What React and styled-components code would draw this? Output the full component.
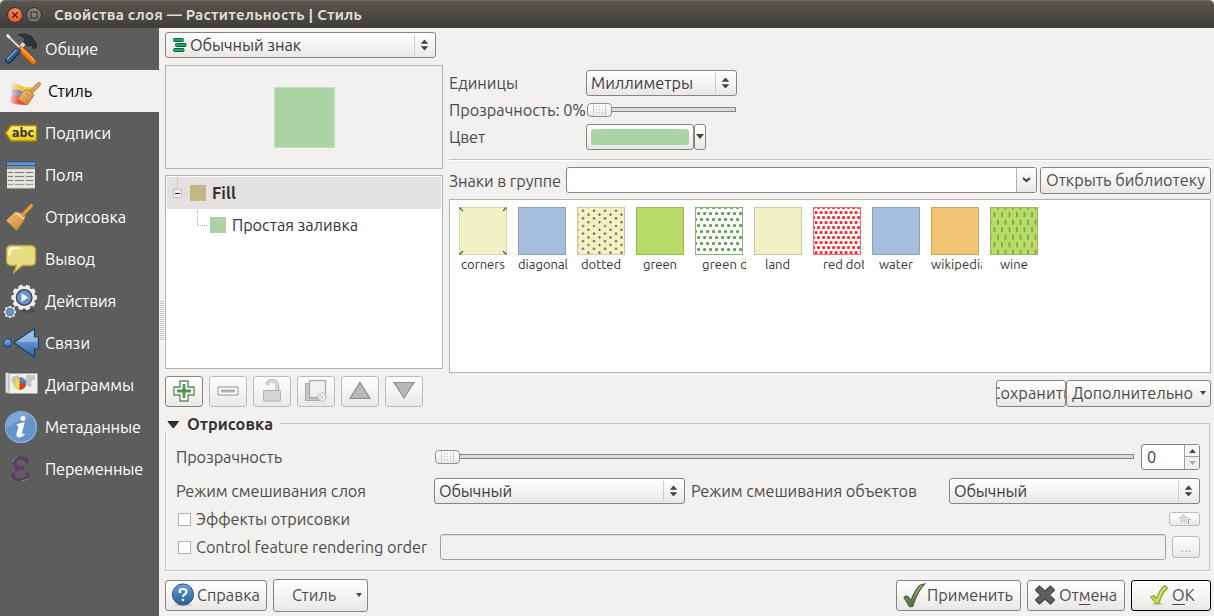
import React, { useLayoutEffect, useRef, useState } from 'react';
import styled, { createGlobalStyle, css } from 'styled-components';

const Global = createGlobalStyle`
  *, *::before, *::after { box-sizing: border-box; }
  html, body, #root { margin: 0; width: 1214px; height: 616px; overflow: hidden; }
  body {
    font-family: Ubuntu, "Noto Sans", "Open Sans", sans-serif;
    font-size: 16.3px; line-height: 20px; color: #4c4c4c; background: #f2f1f0;
  }
  svg { display: block; flex: none; }
`;

/* ---------- text ---------- */

const FitSpan = styled.span`
  display: inline-block;
  white-space: nowrap;
  flex: none;
  width: ${p => p.$w}px;
  font-size: ${p => p.$size || 16.3}px;
`;

function Label({ w, size, children, className }) {
  const ref = useRef(null);
  const [tracking, setTracking] = useState(0);
  useLayoutEffect(() => {
    const range = document.createRange();
    range.selectNodeContents(ref.current);
    const natural = range.getBoundingClientRect().width;
    const count = ref.current.textContent.length;
    setTracking((w - natural) / count);
  }, [w, size]);
  return (
    <FitSpan ref={ref} className={className} $w={w} $size={size} style={{ letterSpacing: tracking }}>
      {children}
    </FitSpan>
  );
}

/* ---------- window ---------- */

const Window = styled.div`
  width: 1214px; height: 616px; display: flex; flex-direction: column;
  background: #f2f1f0; overflow: hidden;
`;
const TitleBar = styled.header`
  height: 28px; flex: none; display: flex; align-items: center; padding: 1px 6px 0 7px;
  border-radius: 5px 5px 0 0;
  background: linear-gradient(#5b5952 0, #55534b 3px, #3f3e39 100%);
  border-top: 1px solid #6a685f;
  color: #dfdbd2; font-weight: 700;
`;
const WinButton = styled.span`
  width: 16px; height: 16px; border-radius: 50%; margin-right: ${p => p.$gap}px;
  display: grid; place-items: center; border: 1px solid #35332d;
  background: ${p => (p.$close ? 'radial-gradient(circle at 50% 25%, #f58a63, #e2521f)' : 'radial-gradient(circle at 50% 25%, #8d8a80, #67655c)')};
`;
const Body = styled.div`display: flex; flex: 1; min-height: 0;`;

const Sidebar = styled.nav`width: 159px; flex: none; background: #5d5d5d; color: #fff;`;
const NavItem = styled.div`
  height: 42px; display: flex; align-items: center;
  padding-left: ${p => (p.$active ? 3 : 0)}px;
  background: ${p => (p.$active ? '#f2f1f0' : 'transparent')};
  color: ${p => (p.$active ? '#000' : '#fff')};
  svg { width: 45px; height: 42px; }
`;
const Splitter = styled.div`
  width: 6px; flex: none; padding-top: 273px;
  &::before {
    content: ''; display: block; width: 4px; height: 40px; margin-left: 1px;
    background: repeating-linear-gradient(#c4c2bf 0 1px, #fbfbfa 1px 2px);
  }
`;
const Content = styled.main`width: 1046px; flex: none; padding-top: 4px; display: flex; flex-direction: column;`;

/* ---------- controls ---------- */

const raised = css`
  border: 1px solid ${p => (p.$off ? '#bdbbb8' : '#878583')};
  border-radius: 3px;
  background: linear-gradient(#fff, #f5f4f3 50%, #e9e8e6);
`;
const Button = styled.button`
  ${raised}
  width: ${p => p.$w}px; height: ${p => p.$h}px; flex: none; padding: 0 ${p => p.$pr || 0}px 1px ${p => p.$pl || 0}px;
  display: flex; align-items: center; justify-content: ${p => (p.$pl !== undefined ? 'flex-start' : 'center')};
  font: inherit; color: ${p => (p.$off ? '#a5a3a0' : '#4c4c4c')}; overflow: hidden; text-align: left;
  ${p => p.$default && 'border-color: #000;'}
  u { text-underline-offset: 3px; text-decoration-thickness: 1px; }
`;
const ComboBox = styled.div`
  ${raised}
  width: ${p => p.$w}px; height: 26px; flex: none; display: flex; align-items: center;
  padding-left: ${p => (p.$pl === undefined ? 4 : p.$pl)}px; color: #3c3c3c;
`;
const ComboArrows = styled.span`
  margin-left: auto; width: 21px; height: 20px; border-left: 1px solid #d0cecb; padding-left: 5px;
  display: flex; align-items: center;
`;
const Combo = ({ w, pl, children }) => (
  <ComboBox $w={w} $pl={pl}>
    {children}
    <ComboArrows>
      <svg width="9" height="12" viewBox="0 0 9 12"><path d="M4.5 0.6 8.3 4.8H.7zM4.5 11.4 8.3 7.2H.7z" fill="#444" /></svg>
    </ComboArrows>
  </ComboBox>
);

const SliderBox = styled.div`display: flex; align-items: center; width: ${p => p.$w}px; flex: none; padding-bottom: 1px;`;
const Knob = styled.span`
  ${raised}
  width: 25px; height: 14px; border-radius: 4px; flex: none; display: grid; place-items: center;
  border-color: #92908d;
`;
const Track = styled.span`
  flex: 1; height: 5px; border: 1px solid #868482; border-left: 0; background: #dddbd9;
`;
const Slider = ({ w }) => (
  <SliderBox $w={w}>
    <Knob>
      <svg width="13" height="12" viewBox="0 0 13 12">
        <path d="M.5 0v12M12.5 0v12" stroke="#d0ceca" />
        <path d="M3 2.5h8M3 5.5h8M3 8.5h8" stroke="#c0beba" strokeDasharray="1 2" />
      </svg>
    </Knob>
    <Track />
  </SliderBox>
);

const Check = styled.span`
  width: 13px; height: 13px; flex: none; background: #fff; border: 1px solid #b3b1ae; margin-right: 5px;
`;

/* ---------- upper part ---------- */

const Upper = styled.section`display: flex; gap: 6px; height: 375px;`;
const LeftColumn = styled.div`width: 278px; flex: none; display: flex; flex-direction: column;`;
const RightColumn = styled.div`width: 762px; flex: none; padding-top: 38px; display: flex; flex-direction: column;`;

const Preview = styled.div`
  height: 104px; margin-top: 7px; border: 1px solid #b3b1ae; display: grid; place-items: center;
`;
const PreviewSwatch = styled.div`width: 61px; height: 61px; background: #acd3a4; border: 1px solid #c4dfbe;`;
const Tree = styled.div`
  height: 194px; margin-top: 6px; border: 1px solid #b3b1ae; background: #fff; padding: 1px;
`;
const TreeRow = styled.div`
  height: 32px; display: flex; align-items: center; color: #333;
  background: ${p => (p.$selected ? '#e4e2e0' : 'transparent')};
  font-weight: ${p => (p.$selected ? 700 : 400)};
`;
const LayerSwatch = styled.span`width: 16px; height: 16px; flex: none; margin-right: 6px; background: ${p => p.$color};`;
const ToolRow = styled.div`display: flex; gap: 6px; margin-top: 7px;`;

const FormRow = styled.div`
  display: flex; align-items: center; height: ${p => p.$h}px; padding-left: ${p => p.$pl || 0}px;
  margin-bottom: ${p => p.$mb || 0}px; flex: none;
`;
const ColorFill = styled.span`width: 98px; height: 16px; border-radius: 3px; background: #acd3a4;`;
const Divider = styled.div`height: 2px; margin: 9px 0 6px; border-top: 1px solid #c6c4c1; border-bottom: 1px solid #fff;`;
const EditCombo = styled.div`
  width: 471px; height: 26px; margin: 0 3px 1px 0; flex: none; border: 1px solid #878583; border-radius: 3px; background: #fff;
  display: flex; justify-content: flex-end; overflow: hidden;
`;
const EditArrow = styled.span`
  width: 20px; border-left: 1px solid #b3b1ae; display: grid; place-items: center;
  background: linear-gradient(#fff, #e9e8e6);
`;
const SymbolList = styled.div`
  height: 174px; margin-top: 5px; border: 1px solid #b3b1ae; background: #fff; padding: 7px 9px;
  display: flex; align-items: flex-start; gap: 8px;
`;
const SymbolCell = styled.div`width: 51px; flex: none; overflow: hidden; color: #333; line-height: 17px;`;
const Caption = styled.div`padding-left: ${p => p.$pl}px; line-height: 17px;`;
const SaveRow = styled.div`display: flex; justify-content: flex-end; margin-top: 7px;`;
const MenuArrow = styled.span`
  margin-left: auto; border: 3px solid transparent; border-top: 4px solid #444; border-bottom: 0;
`;

/* ---------- rendering group ---------- */

const GroupHead = styled.div`
  display: flex; align-items: center; height: 18px; margin-top: 8px; width: 1045px; color: #333; font-weight: 700;
  &::after { content: ''; flex: 1; height: 10px; margin: 7px 0 0 7px; border-top: 1px solid #c6c4c1; border-right: 1px solid #c6c4c1; }
`;
const GroupFrame = styled.section`
  width: 1045px; height: 138px; border: 1px solid #c6c4c1; border-top: 0; padding: 11px 9px 0 10px;
  box-shadow: inset 1px 0 #fbfbfa, 0 1px #fff; display: flex; flex-direction: column;
`;
const SpinBox = styled.div`
  width: 59px; height: 26px; margin-left: 7px; border: 1px solid #878583; border-radius: 3px; background: #fff; display: flex;
  align-items: center; padding-left: 5px; color: #3c3c3c; overflow: hidden;
`;
const SpinButtons = styled.span`
  margin-left: auto; width: 15px; height: 24px; border-left: 1px solid #a3a19e; display: grid; grid-template-rows: 12px 12px;
  place-items: center; background: linear-gradient(#f8f7f6 0 11px, #a3a19e 11px 12px, #f0efed 12px);
`;
const DisabledInput = styled.div`
  width: 726px; height: 26px; border: 1px solid #a3a19e; border-radius: 3px; box-shadow: inset 0 1px #dddbd9;
`;
const Spacer = styled.span`flex: ${p => (p.$w ? 'none' : 1)}; width: ${p => p.$w || 0}px;`;
const Footer = styled.footer`display: flex; align-items: center; height: 33px; margin-top: 8px; gap: 6px;`;

/* ---------- drawings ---------- */

const IconDefs = () => (
  <svg width="0" height="0" style={{ position: 'absolute' }}>
    <defs>
      <linearGradient id="gBlue" x1="0" y1="0" x2="0" y2="1"><stop offset="0" stopColor="#8fb8e6" /><stop offset="1" stopColor="#2c64a8" /></linearGradient>
      <linearGradient id="gYellow" x1="0" y1="0" x2="0" y2="1"><stop offset="0" stopColor="#fff27a" /><stop offset="1" stopColor="#e8c91a" /></linearGradient>
      <linearGradient id="gBrush" x1="0" y1="0" x2="1" y2="1"><stop offset="0" stopColor="#f5c98a" /><stop offset="1" stopColor="#c87f28" /></linearGradient>
      <linearGradient id="gFade" x1="0" y1="0" x2="1" y2="0"><stop offset="0" stopColor="#f2f1f0" /><stop offset="1" stopColor="#f2f1f0" stopOpacity="0" /></linearGradient>
      <linearGradient id="gCheckDark" x1="0" y1="0" x2="0" y2="1"><stop offset="0" stopColor="#a3b398" /><stop offset="1" stopColor="#4f6c3a" /></linearGradient>
      <linearGradient id="gHelp" x1="0" y1="0" x2="0" y2="1"><stop offset="0" stopColor="#6fa1d8" /><stop offset="1" stopColor="#245a96" /></linearGradient>
    </defs>
  </svg>
);

const Nav = ({ children }) => <svg viewBox="0 0 45 42">{children}</svg>;

const gearPath = (cx, cy, r1, r2, teeth) => {
  const pts = [];
  for (let i = 0; i < teeth; i += 1) {
    const a = (i / teeth) * Math.PI * 2;
    const s = (Math.PI * 2) / teeth;
    [[-0.36, r1], [-0.24, r2], [0.24, r2], [0.36, r1]].forEach(([k, r]) => {
      pts.push(`${(cx + Math.cos(a + k * s) * r).toFixed(2)} ${(cy + Math.sin(a + k * s) * r).toFixed(2)}`);
    });
  }
  return `M${pts.join('L')}Z`;
};

const IconTools = () => (
  <Nav>
    <path d="M8 8 24 24" stroke="#d9d9d9" strokeWidth="1.8" />
    <path d="M6.5 6.5 8 6l2.6 3 0 2-2-.5-2.4-2.6z" fill="#fafafa" stroke="#aaa" strokeWidth=".5" />
    <path d="M26 13 20 20" stroke="#d6d6d6" strokeWidth="4" />
    <path d="M18 7C21 5.500 28 5.500 32 9L36.500 15.500 36 20 33.500 20.500 31.500 17 28 18 23 14 25 11C23 8 20 7.500 18 7z" fill="#303638" stroke="#15191a" strokeWidth=".6" />
    <path d="M20.500 21 33.500 34" stroke="#bd4e00" strokeWidth="5.800" />
    <path d="M20.500 20.500 33.500 33.500" stroke="#f27a0a" strokeWidth="4.600" strokeLinecap="round" />
    <path d="M21 20 34 32" stroke="#ffac52" strokeWidth="1.300" />
    <path d="M17.500 23 8.500 32.500" stroke="#162d50" strokeWidth="6.200" strokeLinecap="round" />
    <path d="M17.500 22.500 8.500 32" stroke="#315b93" strokeWidth="4.600" strokeLinecap="round" />
    <path d="M16 22 7.500 31" stroke="#83a7d4" strokeWidth="1.400" strokeLinecap="round" />
  </Nav>
);
const IconStyle = () => (
  <Nav>
    <path d="M9 13Q15 14 19 16T29 17L26 25 8 20z" fill="#f8c74a" />
    <path d="M9 19Q15 19 22 22L24 30 8 26z" fill="#8e8fb0" />
    <path d="M8 25Q14 25 20 28L27 32 23 35Q15 35 7 33z" fill="#f04a3a" />
    <rect x="5" y="11" width="11" height="25" fill="url(#gFade)" />
    <path d="M28 22 36 14" stroke="#b9742b" strokeWidth="4" strokeLinecap="round" />
    <path d="M28 22 36 14" stroke="#e3a055" strokeWidth="2.800" strokeLinecap="round" />
    <path d="M21 20.500 26 20 31 25 29 28.500 24 35 15 28.500z" fill="url(#gBrush)" stroke="#b9742b" strokeWidth=".8" />
    <path d="m19 25 7.500 6M17 27l7.500 5.500M22 23l7 4" stroke="#b87528" strokeWidth=".5" />
  </Nav>
);
const IconLabel = () => (
  <Nav>
    <path d="M5.500 21 11 13.500H36.500V29H11z" fill="url(#gYellow)" stroke="#a98700" strokeWidth="1.400" strokeLinejoin="round" />
    <text x="12" y="25" fontFamily="DejaVu Sans" fontWeight="700" fontSize="11.500" textLength="22" lengthAdjust="spacingAndGlyphs" fill="#3a3626">abc</text>
  </Nav>
);
const IconTable = () => (
  <Nav>
    <rect x="7" y="8" width="28" height="26.500" fill="#d9dad3" />
    <rect x="7" y="12" width="28" height="3" fill="#8f908c" />
    <rect x="6.500" y="8" width="29" height="3.500" fill="#6d98cf" stroke="#2f5894" />
    {[14.500, 18.500, 22.500, 26.500, 30.500].map(y => (
      <path key={y} d={`M8 ${y}h5M15 ${y}h9M26 ${y}h7`} stroke={y > 27 ? '#a0a298' : '#85877f'} />
    ))}
    {[16.500, 20.500, 24.500, 28.500, 32.500].map(y => <path key={y} d={`M7 ${y}h28`} stroke="#eeeee9" />)}
  </Nav>
);
const IconBrush = () => (
  <Nav>
    <path d="M23 18.500 31.500 9.500" stroke="#a5691c" strokeWidth="4.200" strokeLinecap="round" />
    <path d="M23 18.500 31.500 9.500" stroke="#e1a24a" strokeWidth="2.600" strokeLinecap="round" />
    <path d="M15.500 15.500C19 18 22 15.500 24.500 18.500S23 24 23 26L16.500 34.500 6 24.500z" fill="url(#gBrush)" stroke="#b9772b" strokeWidth=".8" />
    <path d="m13 20 8.500 7M10 22l8.500 8.500M12 27l4.500 4.500" stroke="#c58638" strokeWidth=".8" strokeDasharray="1.500 1" />
    <path d="M16 16.500 24 23" stroke="#fbe3b8" strokeWidth="1.200" />
  </Nav>
);
const IconBubble = () => (
  <Nav>
    <path d="M11 7.500H31Q35.500 8 35.500 12V23Q35.500 27.500 31 27.500H22.500L13.500 35 16.500 27.500H11Q6.500 27 6.500 23V12Q6.500 8 11 7.500z" fill="#e7dd83" stroke="#b8a33a" strokeWidth="1.300" strokeLinejoin="round" />
    <path d="M9.500 17V13.500Q10 10.500 13 10.300H19" fill="none" stroke="#fffbe6" strokeWidth="2" strokeLinecap="round" />
  </Nav>
);
const IconGear = () => (
  <Nav>
    <ellipse cx="28" cy="30.500" rx="8" ry="2" fill="#4c4c4c" />
    <path d={gearPath(24.200, 17.500, 11, 13, 10)} fill="#ededec" />
    <circle cx="24.200" cy="17.500" r="7.800" fill="#6796cb" stroke="#3a3f48" strokeWidth="1.300" />
    <path d="M21.500 13.300 28.300 17.500 21.500 21.700z" fill="#fff" />
    <path d={gearPath(10, 32, 5, 6.200, 8)} fill="#e4e4e4" />
    <circle cx="10" cy="32" r="3.700" fill="#6796cb" stroke="#3d5f89" strokeWidth=".7" />
  </Nav>
);
const IconJoin = () => (
  <Nav>
    <circle cx="7.500" cy="21" r="4" fill="url(#gBlue)" stroke="#1c4170" />
    <path d="M13.500 20.500 34.500 6.500V15H38.500V27H34.500V35.500z" fill="url(#gBlue)" stroke="#203f6b" strokeWidth="1.200" strokeLinejoin="round" />
    <path d="M16 20 33.500 8.500V15.500H37.500V20z" fill="#b9d4f2" opacity=".5" />
  </Nav>
);
const IconDiagram = () => (
  <Nav>
    <path d="M8 9.500H37.500V29.500H8z" fill="#f0f1ee" />
    <path d="M12 13l6-2 2 3-4 3-1 5-4-5zM26 11l9 0 0 4-4 3 1 4-4 1-3-6z" fill="#c6c8bf" />
    <rect x="5.500" y="8.500" width="3.500" height="20.500" rx="1.500" fill="#dedfd8" stroke="#9b9c94" strokeWidth=".8" />
    <path d="M20 19.500V13.500A6 6 0 0 0 20 25.500z" fill="#f3d558" stroke="#c9a52a" strokeWidth=".5" />
    <path d="M20 19V13.500A6 6 0 0 1 26 19z" fill="#5688c0" stroke="#2f5a8c" strokeWidth=".5" />
    <path d="M20 19.500H26A6 6 0 0 1 20 25.500z" fill="#e23a2a" stroke="#a22016" strokeWidth=".5" />
  </Nav>
);
const IconInfo = () => (
  <Nav>
    <circle cx="21" cy="21" r="15.500" fill="#6695cc" stroke="#8db1db" strokeWidth="1.200" />
    <path d="M6.500 22A14.500 14.500 0 0 1 31 10.500Q20 13 6.500 22z" fill="#7da7d8" />
    <circle cx="23" cy="12.500" r="2.500" fill="#fff" />
    <path d="M17 18.300Q21 17.500 24.300 16.500L21.500 27.500Q21.300 29.300 24 27.800L24.500 28.500Q20.500 32 18 31Q16 30 17 27L18.800 20.500Q19 19.300 17 19.300z" fill="#fff" stroke="#fff" strokeWidth=".6" />
  </Nav>
);
const IconEpsilon = () => (
  <Nav>
    <path d="M27.500 12.500Q25.500 9.500 21 9.700Q14.500 10.200 14.200 14.500Q14.500 19.500 22 20H24.500M22 20.300Q12.800 21 12.700 26.500Q13.500 32 20.500 32Q26.500 31.500 28.300 27.500" fill="none" stroke="#5f3a66" strokeWidth="3.400" />
    <circle cx="26.800" cy="13.300" r="2.300" fill="#5f3a66" /><circle cx="27.800" cy="26.800" r="2.200" fill="#5f3a66" />
    <path d="M12.700 14Q14 10 17 9M11.700 25Q12.500 22.500 15 21.500M21 33Q25.500 32.500 28 30.500" fill="none" stroke="#a587ab" strokeWidth=".9" />
  </Nav>
);

const IconSingleSymbol = () => (
  <svg width="14" height="14" viewBox="0 0 14 14" fill="#17b169" stroke="#076035">
    <rect x=".5" y=".5" width="10" height="3" rx="1" /><rect x="2.500" y="5.500" width="10.500" height="3" rx="1" /><rect x=".5" y="10.500" width="10.500" height="3" rx="1" />
  </svg>
);
const ToolIcon = ({ children }) => <svg width="24" height="24" viewBox="0 0 24 24">{children}</svg>;
const toolIcons = {
  add: <ToolIcon><path d="M8 2h8v6h6v8h-6v6H8v-6H2V8h6z" fill="#fff" stroke="#5a915a" strokeWidth="1.400" /><path d="M12 5v14M5 12h14" stroke="#559055" strokeWidth="2.800" /></ToolIcon>,
  remove: <ToolIcon><rect x="2" y="8" width="20" height="8" fill="#fafafa" stroke="#aaa" strokeWidth="1.300" /><path d="M5 12h14" stroke="#b1b1b1" strokeWidth="3" /></ToolIcon>,
  lock: <ToolIcon><path d="M7 6Q8 1.800 12 1.800Q17.500 2 17.500 8V12" fill="none" stroke="#b0b0b0" strokeWidth="3.400" /><path d="M7 6Q8 2 12 2Q17.300 2 17.300 8V12" fill="none" stroke="#dedede" strokeWidth="1.800" /><rect x="3.500" y="11.500" width="17" height="10.500" rx="1" fill="#d6d6d6" stroke="#b0b0b0" /></ToolIcon>,
  copy: <ToolIcon><path d="M1.500 4.500h4v14h14v3h-18z" fill="#c5c5c5" stroke="#a8a8a8" /><rect x="5.500" y="1.500" width="16" height="17" fill="#f1f1f1" stroke="#aaa" strokeWidth="1.300" /><circle cx="18" cy="18" r="4" fill="#f2f2f2" stroke="#b5b5b5" strokeWidth="1.300" strokeDasharray="1.600 1" /><path d="M15.500 15.500l5 5M20.500 15.500l-5 5" stroke="#ccc" strokeWidth="1" /></ToolIcon>,
  up: <ToolIcon><path d="M12 3.500 22 19.500H2z" fill="#b9b9b9" stroke="#8d8d8d" strokeWidth="1.200" /></ToolIcon>,
  down: <ToolIcon><path d="M2 3.500H22L12 19z" fill="#b9b9b9" stroke="#8d8d8d" strokeWidth="1.200" /></ToolIcon>,
};
const IconHelp = () => (
  <svg width="24" height="24" viewBox="0 0 24 24">
    <ellipse cx="12" cy="22" rx="9" ry="1.500" fill="#cfcdca" />
    <circle cx="12" cy="11.500" r="10.600" fill="url(#gHelp)" stroke="#285888" />
    <path d="M8.500 9.200Q8.300 6 12 6Q15.500 6 15.500 8.800Q15.500 10.500 13.500 11.500Q12 12.300 12 14" fill="none" stroke="#fff" strokeWidth="2" />
    <circle cx="12" cy="17" r="1.300" fill="#fff" /><circle cx="8.900" cy="8.900" r="1.200" fill="#fff" />
  </svg>
);
const IconApply = () => (
  <svg width="24" height="26" viewBox="0 0 24 26">
    <path d="M2 15.500Q4.500 13 6.500 15L9 18.500Q13 7 18.500 3L22.500 2Q15 10 11 24Q9 25.500 7 24Z" fill="url(#gCheckDark)" stroke="#4c6338" strokeWidth="1.100" />
  </svg>
);
const IconCancel = () => (
  <svg width="22" height="22" viewBox="0 0 22 22">
    <path d="M5.500 2 11 7 16.500 2 20.500 6 15.500 11 20.500 16 16.500 20 11 15 5.500 20 1.500 16 6.500 11 1.500 6z" fill="#5e605e" stroke="#484a48" strokeWidth="1.200" strokeLinejoin="round" />
  </svg>
);
const IconOk = () => (
  <svg width="20" height="22" viewBox="0 0 20 22">
    <ellipse cx="8" cy="20" rx="6" ry="1.300" fill="#cfcdca" />
    <path d="M1.500 13 5 11.500 7.500 14.500Q10.500 6 15.500 1.500L18.500 4Q12 10.500 10 19.500H7Z" fill="#b8dc43" stroke="#83a534" strokeWidth="1.100" strokeLinejoin="round" />
    <path d="M8 17Q11 8 16 3" stroke="#e0f08a" fill="none" />
  </svg>
);

const marks = (dx, dy, x0, y0, draw) => {
  const out = [];
  for (let r = 0; r * dy + y0 <= 49; r += 1) {
    for (let c = -1; c * dx <= 49; c += 1) out.push(draw(c * dx + (r % 2 ? x0 : 0) + 0.5, r * dy + y0, `${r}-${c}`));
  }
  return out;
};
const patterns = {
  corners: <path d="M0 0 4 4M48 0 44 4M0 48 4 44M48 48 44 44M0 3V0H3M45 0H48V3M0 45V48H3M45 48H48V45" stroke="#4f523b" fill="none" strokeWidth="1.100" />,
  dotted: marks(11, 3.8, 5.5, 0, (x, y, k) => <path key={k} d={`M${x - 1.3} ${y}h2.600M${x} ${y - 1.3}v2.600`} stroke="#8b6a45" strokeWidth="1.200" />),
  greenDots: marks(6, 6, 3, 0.5, (x, y, k) => <rect key={k} x={x - 1.3} y={y - 1.3} width="2.700" height="2.700" fill="#4f9c3c" />),
  redDots: marks(5, 5, 2.5, 0.5, (x, y, k) => <rect key={k} x={x - 1.3} y={y - 1.3} width="2.700" height="2.700" fill="#ff1a22" />),
  wine: marks(7.5, 7.5, 4, 0.2, (x, y, k) => <rect key={k} x={x - 1} y={y - 2.5} width="2" height="5" fill="#88a94c" />),
};
const Swatch = ({ fill, edge, pattern }) => (
  <svg width="48" height="48" viewBox="0 0 48 48">
    <rect width="48" height="48" fill={fill} />
    {patterns[pattern]}
    <rect x=".5" y=".5" width="47" height="47" fill="none" stroke={edge} opacity={pattern === 'corners' ? 0.6 : 1} />
  </svg>
);

/* ---------- data ---------- */

const nav = [
  [IconTools, 'Общие', 53], [IconStyle, 'Стиль', 44], [IconLabel, 'Подписи', 66], [IconTable, 'Поля', 38],
  [IconBrush, 'Отрисовка', 81], [IconBubble, 'Вывод', 50], [IconGear, 'Действия', 71], [IconJoin, 'Связи', 45],
  [IconDiagram, 'Диаграммы', 89], [IconInfo, 'Метаданные', 96], [IconEpsilon, 'Переменные', 98],
];
const symbols = [
  ['corners', 2, 44, '#f0f2c5', '#c4c69f', 'corners'],
  ['diagonal', 0, 50, '#a6bedd', '#8b9fb8'],
  ['dotted', 4, 40, '#f0f2c5', '#c8cba0', 'dotted'],
  ['green', 7, 34, '#b9dc68', '#9bb858'],
  ['green dots', 7, 65, '#fff', '#82b975', 'greenDots'],
  ['land', 11, 25, '#f0f2c5', '#c8cba0'],
  ['red dots', 10, 49, '#fff', '#f06d75', 'redDots'],
  ['water', 7, 34, '#a6bedd', '#8b9fb8'],
  ['wikipedia', 0, 56, '#f0c674', '#c8a561'],
  ['wine', 10, 28, '#b9dc68', '#9bb858', 'wine'],
];

export default function App() {
  return (
    <Window>
      <Global />
      <IconDefs />
      <TitleBar>
        <WinButton $close $gap={3}><svg width="8" height="8" viewBox="0 0 8 8"><path d="m1.300 1.300 5.400 5.400m0-5.400-5.400 5.400" stroke="#4a1c0c" strokeWidth="1.300" /></svg></WinButton>
        <WinButton $gap={12}><svg width="8" height="8" viewBox="0 0 8 8"><rect x="1" y="1" width="6" height="6" fill="none" stroke="#35342f" strokeWidth="1.100" /></svg></WinButton>
        <Label w={308} size={15}>Свойства слоя — Растительность | Стиль</Label>
      </TitleBar>
      <Body>
        <Sidebar>
          {nav.map(([Icon, text, w], i) => (
            <NavItem key={text} $active={i === 1}><Icon /><Label w={w}>{text}</Label></NavItem>
          ))}
        </Sidebar>
        <Splitter />
        <Content>
          <Upper>
            <LeftColumn>
              <Combo w={271} pl={7}><IconSingleSymbol /><Spacer $w={3} /><Label w={111}>Обычный знак</Label></Combo>
              <Preview><PreviewSwatch /></Preview>
              <Tree>
                <TreeRow $selected>
                  <svg width="23" height="32" viewBox="0 0 23 32">
                    <path d="M10.500 0v12M15 16.500h6" stroke="#b5b3b0" strokeDasharray="1 1" />
                    <rect x="6.500" y="12.500" width="8" height="8" fill="#f1f0ef" stroke="#c1bfbc" /><path d="M8 16.500h5" stroke="#222" />
                  </svg>
                  <LayerSwatch $color="#c2b685" /><Label w={24}>Fill</Label>
                </TreeRow>
                <TreeRow>
                  <svg width="43" height="32" viewBox="0 0 43 32"><path d="M30.500 1v15.500H41" fill="none" stroke="#b5b3b0" strokeDasharray="1 1" /></svg>
                  <LayerSwatch $color="#acd3a4" /><Label w={126}>Простая заливка</Label>
                </TreeRow>
              </Tree>
              <ToolRow>
                {Object.entries(toolIcons).map(([name, icon]) => <Button key={name} $w={38} $h={31} $off={name !== 'add'}>{icon}</Button>)}
              </ToolRow>
            </LeftColumn>
            <RightColumn>
              <FormRow $h={26}><Label w={69}>Единицы</Label><Spacer $w={68} /><Combo w={151}><Label w={102}>Миллиметры</Label></Combo></FormRow>
              <FormRow $h={28}><Label w={137}>Прозрачность: 0%</Label><Spacer $w={1} /><Slider w={149} /></FormRow>
              <FormRow $h={26}>
                <Label w={36}>Цвет</Label><Spacer $w={101} />
                <Button $w={108} $h={26}><ColorFill /></Button>
                <Button $w={12} $h={26}><svg width="8" height="5" viewBox="0 0 8 5"><path d="M0 0h8L4 5z" fill="#444" /></svg></Button>
              </FormRow>
              <Divider />
              <FormRow $h={27}>
                <Label w={112}>Знаки в группе</Label><Spacer $w={5} />
                <EditCombo><EditArrow><svg width="9" height="6" viewBox="0 0 9 6"><path d="M1 1 4.500 4 8 1" fill="none" stroke="#444" strokeWidth="2.200" /></svg></EditArrow></EditCombo>
                <Button $w={171} $h={27} $pl={5}><Label w={159}>Открыть библиотеку</Label></Button>
              </FormRow>
              <SymbolList>
                {symbols.map(([name, pl, w, fill, edge, pattern]) => (
                  <SymbolCell key={name}>
                    <Swatch fill={fill} edge={edge} pattern={pattern} />
                    <Caption $pl={pl}><Label w={w} size={13}>{name}</Label></Caption>
                  </SymbolCell>
                ))}
              </SymbolList>
              <SaveRow>
                <Button $w={70} $h={27}><Label w={81}>Сохранить</Label></Button>
                <Button $w={145} $h={27} $pl={5} $pr={4}><Label w={121}>Дополнительно</Label><MenuArrow /></Button>
              </SaveRow>
            </RightColumn>
          </Upper>
          <GroupHead>
            <svg width="22" height="18" viewBox="0 0 22 18"><path d="M3 6.500h10.500L8.300 13z" fill="#333" stroke="#222" /></svg>
            <Label w={86}>Отрисовка</Label>
          </GroupHead>
          <GroupFrame>
            <FormRow $h={26} $mb={8}><Label w={106}>Прозрачность</Label><Spacer $w={153} /><Slider w={699} /><SpinBox><Label w={9}>0</Label><SpinButtons>
              <svg width="7" height="4" viewBox="0 0 7 4"><path d="M3.500 0 7 4H0z" fill="#444" /></svg>
              <svg width="7" height="4" viewBox="0 0 7 4"><path d="M3.500 4 7 0H0z" fill="#aaa" /></svg>
            </SpinButtons></SpinBox></FormRow>
            <FormRow $h={26}>
              <Label w={190}>Режим смешивания слоя</Label><Spacer $w={68} />
              <Combo w={251}><Label w={73}>Обычный</Label></Combo><Spacer $w={6} />
              <Label w={226}>Режим смешивания объектов</Label><Spacer $w={32} />
              <Combo w={251}><Label w={73}>Обычный</Label></Combo>
            </FormRow>
            <FormRow $h={30} $pl={2}>
              <Check /><Label w={154}>Эффекты отрисовки</Label><Spacer />
              <Button $w={31} $h={14} $off><svg width="14" height="12" viewBox="0 0 14 12"><path d="m5.500 1 1.300 3 3.200.3-2.500 2 .8 3.200-2.800-1.700-2.800 1.700.8-3.200L1 4.300 4.200 4z" fill="#ddd" stroke="#bbb" strokeWidth=".8" /><path d="M10.500 11V6.500q.5-1 2 0" stroke="#999" fill="none" /></svg></Button>
            </FormRow>
            <FormRow $h={26} $pl={2}>
              <Check /><Label w={231}>Control feature rendering order</Label><Spacer $w={13} />
              <DisabledInput /><Spacer />
              <Button $w={28} $h={22} $off><Label w={11} size={13}>...</Label></Button>
            </FormRow>
          </GroupFrame>
          <Footer>
            <Button $w={102} $h={31} $pl={5}><IconHelp /><Spacer $w={2} /><Label w={63}>Справка</Label></Button>
            <Button $w={95} $h={33} $pl={18} $pr={5}><Label w={44}>Стиль</Label><MenuArrow /></Button>
            <Spacer />
            <Button $w={125} $h={31} $pl={5}><IconApply /><Spacer $w={1} /><Label w={86}>Применить</Label></Button>
            <Button $w={98} $h={31} $pl={6}><IconCancel /><Spacer $w={3} /><Label w={58}>От<u>м</u>ена</Label></Button>
            <Button $w={80} $h={31} $pl={17} $default><IconOk /><Spacer $w={3} /><Label w={23}><u>O</u>K</Label></Button>
          </Footer>
        </Content>
      </Body>
    </Window>
  );
}
